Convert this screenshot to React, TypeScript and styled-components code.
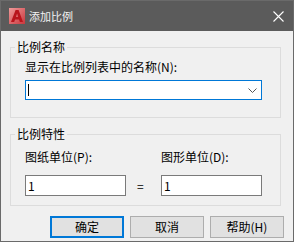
import styled, { createGlobalStyle } from "styled-components";

const GlobalStyle = createGlobalStyle`
  html, body {
    margin: 0;
    padding: 0;
    background: #f0f0f0;
  }
  body {
    font-family: "Noto Sans CJK SC", "Noto Sans", sans-serif;
    font-size: 12px;
    color: #000;
  }
`;

const Window = styled.div`
  width: 294px;
  height: 242px;
  box-sizing: border-box;
  border: 1px solid #6a6a6a;
  background: #f0f0f0;
  display: flex;
  flex-direction: column;
`;

const TitleBar = styled.div`
  height: 30px;
  flex: none;
  background: #5b5b5b;
  display: flex;
  align-items: center;
  padding: 0 9px 0 8px;
`;

const TitleText = styled.span`
  margin-left: 4px;
  color: #f2f2f2;
  font-size: 11px;
  line-height: 14px;
  flex: 1;
`;

const CloseButton = styled.div`
  width: 11px;
  height: 11px;
  display: flex;
`;

const Body = styled.div`
  padding: 9px 9px 0 9px;
  display: flex;
  flex-direction: column;
`;

const Group = styled.fieldset<{ $pad: string }>`
  width: 271px;
  box-sizing: border-box;
  margin: 0;
  padding: ${(p) => p.$pad};
  border: 1px solid #dcdcdc;
  min-width: 0;
  & + & {
    margin-top: 9px;
  }
`;

const Legend = styled.legend`
  margin-left: -10px;
  padding: 0 2px;
  line-height: 14px;
  font-size: 12px;
`;

const Label = styled.div`
  line-height: 14px;
  height: 14px;
  white-space: nowrap;
`;

const Combo = styled.div`
  margin-top: 6px;
  width: 237px;
  height: 20px;
  box-sizing: border-box;
  border: 1px solid #0078d7;
  background: #fff;
  display: flex;
  align-items: center;
  padding: 0 4px 0 2px;
`;

const Caret = styled.div`
  width: 1px;
  height: 12px;
  background: #000;
  flex: none;
`;

const ComboSpacer = styled.div`
  flex: 1;
`;

const UnitsGrid = styled.div`
  display: grid;
  grid-template-columns: 101px 35px 101px;
  grid-template-rows: 14px 21px;
  row-gap: 11px;
`;

const Field = styled.div`
  box-sizing: border-box;
  height: 21px;
  border: 1px solid #7a7a7a;
  background: #fff;
  padding: 0 2px;
  line-height: 19px;
  font-size: 12px;
`;

const Equals = styled.div`
  align-self: center;
  padding-left: 11px;
  line-height: 14px;
`;

const ButtonRow = styled.div`
  margin-top: 10px;
  display: flex;
  justify-content: flex-end;
  gap: 6px;
`;

const Button = styled.div<{ $primary?: boolean }>`
  width: 74px;
  height: 22px;
  box-sizing: border-box;
  background: #e1e1e1;
  border: ${(p) => (p.$primary ? "2px solid #0078d7" : "1px solid #adadad")};
  display: flex;
  align-items: center;
  justify-content: center;
  line-height: 14px;
`;

const AppLogo = () => (
  <svg width="16" height="16" viewBox="0 0 16 16">
    <defs>
      <linearGradient id="lg" x1="0" y1="0" x2="1" y2="1">
        <stop offset="0" stopColor="#ef9a9a" />
        <stop offset="1" stopColor="#c9373d" />
      </linearGradient>
    </defs>
    <rect x="0" y="0" width="16" height="16" fill="url(#lg)" />
    <path d="M2 14 L6.6 2 H9.6 L14 14 H10.9 L10 11.4 H6.1 L5.2 14 Z M6.9 9 H9.2 L8.1 5.6 Z" fill="#b8141c" />
  </svg>
);

const CloseIcon = () => (
  <svg width="11" height="11" viewBox="0 0 11 11">
    <path d="M0.5 0.5 L10.5 10.5 M10.5 0.5 L0.5 10.5" stroke="#fff" strokeWidth="1.1" />
  </svg>
);

const Chevron = () => (
  <svg width="9" height="5" viewBox="0 0 9 5">
    <path d="M0.5 0.5 L4.5 4.5 L8.5 0.5" stroke="#555" strokeWidth="1" fill="none" />
  </svg>
);

export default function App() {
  return (
    <>
      <GlobalStyle />
      <Window>
        <TitleBar>
          <AppLogo />
          <TitleText>添加比例</TitleText>
          <CloseButton>
            <CloseIcon />
          </CloseButton>
        </TitleBar>
        <Body>
          <Group $pad="6px 14px 17px">
            <Legend>比例名称</Legend>
            <Label>显示在比例列表中的名称(N):</Label>
            <Combo>
              <Caret />
              <ComboSpacer />
              <Chevron />
            </Combo>
          </Group>
          <Group $pad="9px 14px 9px">
            <Legend>比例特性</Legend>
            <UnitsGrid>
              <Label>图纸单位(P):</Label>
              <span />
              <Label>图形单位(D):</Label>
              <Field>1</Field>
              <Equals>=</Equals>
              <Field>1</Field>
            </UnitsGrid>
          </Group>
          <ButtonRow>
            <Button $primary>确定</Button>
            <Button>取消</Button>
            <Button>帮助(H)</Button>
          </ButtonRow>
        </Body>
      </Window>
    </>
  );
}
